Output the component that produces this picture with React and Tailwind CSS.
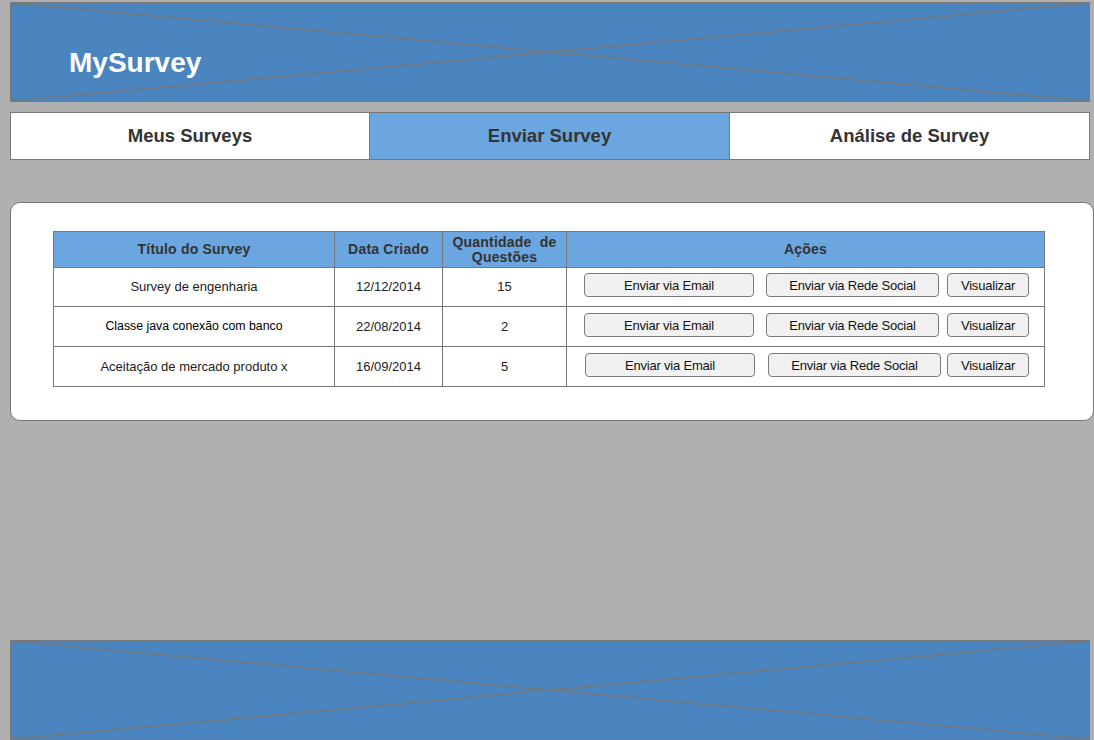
import React from 'react';

const rows = [
  { title: 'Survey de engenharia', date: '12/12/2014', qty: '15', small: false },
  { title: 'Classe java conexão com banco', date: '22/08/2014', qty: '2', small: true },
  { title: 'Aceitação de mercado produto x', date: '16/09/2014', qty: '5', small: false },
];

function Cross() {
  return (
    <svg className="absolute inset-0 w-full h-full" viewBox="0 0 100 100" preserveAspectRatio="none">
      <line x1="0" y1="0" x2="100" y2="100" stroke="#6b7b8c" strokeWidth="2" vectorEffect="non-scaling-stroke" />
      <line x1="100" y1="0" x2="0" y2="100" stroke="#6b7b8c" strokeWidth="2" vectorEffect="non-scaling-stroke" />
    </svg>
  );
}

function Btn({ children, className }) {
  return (
    <button className={`h-[24px] rounded-[4px] border border-[#7a7a7a] bg-[#f1f1f1] text-[13px] tracking-[-0.2px] text-[#111] leading-none ${className}`}>
      {children}
    </button>
  );
}

export default function App() {
  return (
    <div className="w-[1094px] h-[740px] overflow-hidden bg-[#b0b0b0] pt-[2px] pl-[10px] font-['Liberation_Sans',Arial,sans-serif]">
      {/* header */}
      <div className="relative w-[1080px] h-[100px] border border-[#787878] bg-[#4a85bf]">
        <Cross />
        <h1 className="relative pl-[58px] pt-[46px] text-[28px] font-bold leading-none text-white">MySurvey</h1>
      </div>

      {/* tabs */}
      <div className="mt-[10px] flex w-[1080px] h-[48px] border border-[#787878] text-[18.5px] font-bold text-[#333]">
        <div className="w-[359px] flex items-center justify-center bg-white border-r border-[#787878]">Meus Surveys</div>
        <div className="w-[360px] flex items-center justify-center bg-[#6ca6e0] border-r border-[#787878]">Enviar Survey</div>
        <div className="flex-1 flex items-center justify-center bg-white">Análise de Survey</div>
      </div>

      {/* content card */}
      <div className="mt-[42px] w-[1084px] h-[219px] rounded-[10px] border border-[#787878] bg-white pt-[28px] pl-[42px]">
        <table className="w-[992px] border-collapse text-[13px] text-[#222]">
          <thead>
            <tr className="h-[36px] bg-[#6ca6e0] text-[14px] font-bold text-[#333] tracking-[0.2px]">
              <th className="w-[281px] border border-[#787878] font-bold">Título do Survey</th>
              <th className="w-[108px] border border-[#787878] font-bold">Data Criado</th>
              <th className="w-[124px] border border-[#787878] font-bold leading-[15px]">Quantidade&nbsp; de<br />Questões</th>
              <th className="border border-[#787878] font-bold">Ações</th>
            </tr>
          </thead>
          <tbody>
            {rows.map((r, i) => (
              <tr key={i} className={i === 0 ? 'h-[39px]' : 'h-[40px]'}>
                <td className={`border border-[#787878] text-center ${r.small ? 'text-[12.3px] text-black' : ''}`}>{r.title}</td>
                <td className="border border-[#787878] text-center">{r.date}</td>
                <td className="border border-[#787878] text-center">{r.qty}</td>
                <td className={`border border-[#787878] align-top ${i === 0 ? 'pt-[5px]' : 'pt-[6px]'}`}>
                  <div className={`flex items-center ${i === 2 ? 'pl-[18px]' : 'pl-[17px]'}`}>
                    <Btn className="w-[170px]">Enviar via Email</Btn>
                    <Btn className={`w-[173px] ${i === 2 ? 'ml-[13px]' : 'ml-[12px]'}`}>Enviar via Rede Social</Btn>
                    <Btn className={`w-[82px] ${i === 2 ? 'ml-[6px]' : 'ml-[8px]'}`}>Visualizar</Btn>
                  </div>
                </td>
              </tr>
            ))}
          </tbody>
        </table>
      </div>

      {/* footer */}
      <div className="relative mt-[219px] w-[1080px] h-[100px] border border-[#787878] bg-[#4a85bf]">
        <Cross />
      </div>
    </div>
  );
}
